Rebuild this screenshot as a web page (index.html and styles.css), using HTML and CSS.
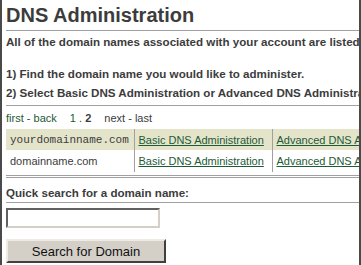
FILE: index.html
```html
<!DOCTYPE html>
<html lang="en">
<head>
<meta charset="UTF-8">
<meta name="viewport" content="width=device-width, initial-scale=1.0">
<title>DNS Administration</title>
<link rel="stylesheet" href="styles.css">
</head>
<body>

<div class="frame">
  <h1 class="title">DNS Administration</h1>

  <p class="intro">All of the domain names associated with your account are listed below.</p>

  <p class="step">1) Find the domain name you would like to administer.</p>
  <p class="step step-last">2) Select Basic DNS Administration or Advanced DNS Administration.</p>

  <div class="pager">
    <a href="#">first</a> - <a href="#">back</a>
    <span class="pages"><a href="#">1</a> . <b>2</b></span>
    <span>next - last</span>
  </div>

  <table class="domains">
    <colgroup>
      <col class="col-name">
      <col class="col-basic">
      <col class="col-adv">
    </colgroup>
    <tr class="highlight">
      <td class="mono">yourdomainname.com</td>
      <td><a href="#">Basic DNS Administration</a></td>
      <td><a href="#">Advanced DNS Administration</a></td>
    </tr>
    <tr>
      <td>domainname.com</td>
      <td><a href="#">Basic DNS Administration</a></td>
      <td><a href="#">Advanced DNS Administration</a></td>
    </tr>
  </table>

  <div class="double-rule"></div>

  <form class="search">
    <label class="search-label" for="q">Quick search for a domain name:</label>
    <input type="text" id="q" class="search-input">
    <button type="submit" class="search-btn">Search for Domain</button>
  </form>
</div>

</body>
</html>
```

FILE: styles.css
```css
:root {
  --text: #3c3c3c;
  --rule: #a0a0a0;
  --link: #1d5a36;
  --row: #e4e4cb;
  --frame: #4a4a4a;
}

body {
  margin: 0;
  font-family: "Liberation Sans", Arial, sans-serif;
  color: var(--text);
  background: #fff;
}

.frame {
  height: 265px;
  box-sizing: border-box;
  border-left: 2px solid var(--frame);
  border-right: 2px solid var(--frame);
  padding-left: 4px;
  overflow: hidden;
  white-space: nowrap;
}

.title {
  margin: 0;
  height: 30px;
  line-height: 30px;
  font-size: 20px;
  font-weight: bold;
  border-bottom: 1px solid var(--rule);
}

.intro, .step {
  margin: 0;
  font-size: 11.6px;
  line-height: 14px;
  font-weight: bold;
}

.intro {
  padding: 4px 0 18px;
}

.step {
  height: 19px;
}

.step-last {
  height: 14px;
  padding-bottom: 5px;
  border-bottom: 1px solid var(--rule);
}

.pager {
  font-size: 11px;
  line-height: 14px;
  padding: 5px 0 4px;
}

.pager a {
  color: var(--link);
  text-decoration: none;
}

.pages {
  margin: 0 10px 0 10px;
}

.domains {
  width: 420px;
  table-layout: fixed;
  border-collapse: collapse;
  font-size: 11px;
}

.col-name {
  width: 128px;
}

.col-basic {
  width: 138px;
}

.domains td {
  padding: 0 4px;
  height: 21px;
  overflow: hidden;
  border-right: 1px solid var(--rule);
}

.domains tr + tr td {
  height: 22px;
}

.domains tr.highlight td {
  background: var(--row);
}

.mono {
  font-family: "Liberation Mono", "Courier New", monospace;
}

.domains a {
  color: var(--link);
}

.double-rule {
  margin-top: 3px;
  height: 1px;
  border-top: 1px solid var(--rule);
  border-bottom: 1px solid var(--rule);
}

.search {
  display: flex;
  flex-direction: column;
  align-items: flex-start;
}

.search-label {
  align-self: stretch;
  font-size: 11.6px;
  line-height: 14px;
  font-weight: bold;
  padding: 8px 0 2px;
  border-bottom: 1px solid var(--rule);
}

.search-input {
  margin-top: 5px;
  width: 154px;
  height: 20px;
  box-sizing: border-box;
  border: 2px solid #d4d0c8;
  border-top-color: #606060;
  border-left-color: #606060;
}

.search-btn {
  margin-top: 11px;
  width: 160px;
  height: 24px;
  font-family: "Liberation Sans", Arial, sans-serif;
  font-size: 13px;
  color: #111;
  background: #d4d0c8;
  border: 2px solid #eeebe4;
  border-right-color: #404040;
  border-bottom-color: #404040;
}
```
